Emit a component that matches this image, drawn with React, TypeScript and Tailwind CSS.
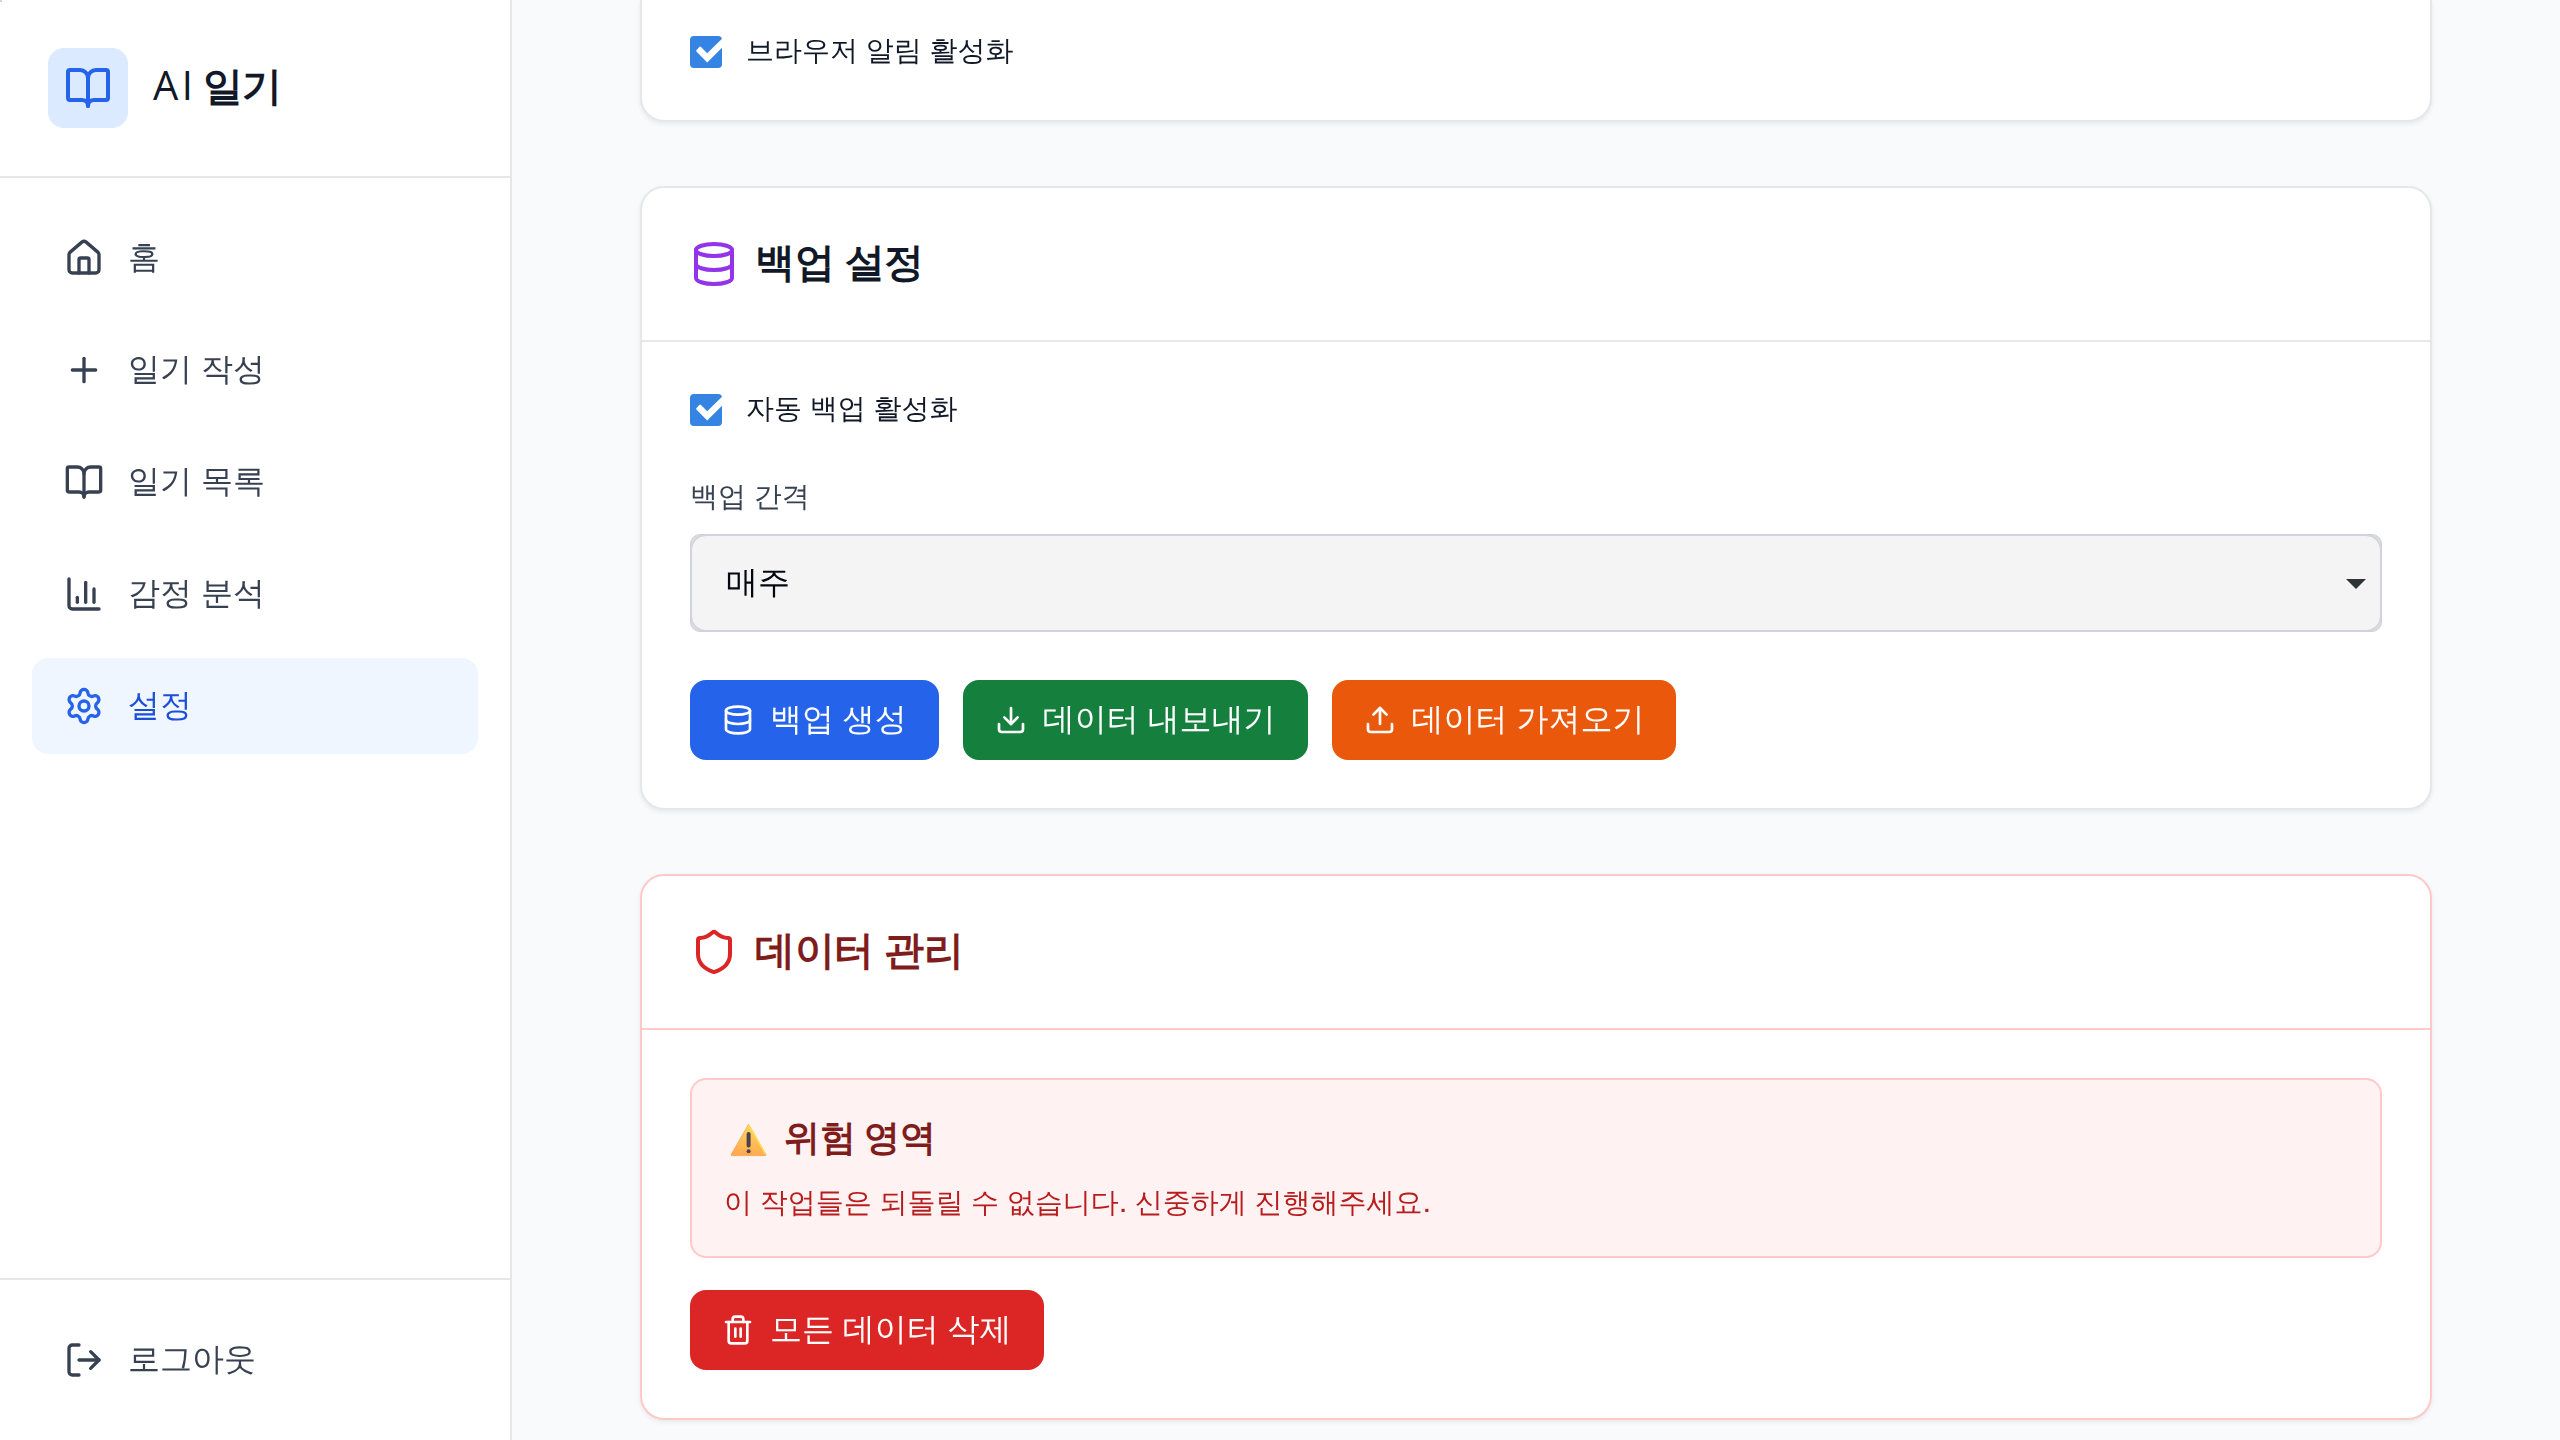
import type { ReactNode } from "react";
import {
  BookOpen,
  ChartColumn,
  Database,
  Download,
  House,
  LogOut,
  Plus,
  Settings,
  Shield,
  Trash2,
  Upload,
  type LucideIcon,
} from "lucide-react";

const navItems: { label: string; icon: LucideIcon; active?: boolean }[] = [
  { label: "홈", icon: House },
  { label: "일기 작성", icon: Plus },
  { label: "일기 목록", icon: BookOpen },
  { label: "감정 분석", icon: ChartColumn },
  { label: "설정", icon: Settings, active: true },
];

function NavItem({ label, icon: Icon, active }: { label: string; icon: LucideIcon; active?: boolean }) {
  return (
    <a
      className={
        active
          ? "flex h-24 items-center gap-6 rounded-2xl bg-[#eff6ff] px-8 text-[#1d4ed8]"
          : "flex h-24 items-center gap-6 rounded-2xl px-8 text-[#374151]"
      }
    >
      <Icon className={active ? "size-10 text-[#2563eb]" : "size-10"} />
      <span className="text-[32px] leading-[48px]">{label}</span>
    </a>
  );
}

function Sidebar() {
  return (
    <aside className="flex w-[512px] shrink-0 flex-col border-r-2 border-[#e5e7eb] bg-white">
      <div className="flex items-center gap-6 border-b-2 border-[#e5e7eb] p-12">
        <div className="rounded-2xl bg-[#dbeafe] p-4">
          <BookOpen className="size-12 text-[#2563eb]" />
        </div>
        <h1 className="mb-1.5 whitespace-nowrap pl-px font-['Liberation_Sans',sans-serif] text-[40px] leading-[56px] font-bold tracking-[-0.4px] text-[#111827]">
          <span className="font-['Open_Sans',sans-serif] font-normal">
            <span className="tracking-[3.4px]">A</span>I
          </span>{" "}
          일기
        </h1>
      </div>
      <nav className="flex flex-1 flex-col gap-4 p-8">
        {navItems.map((item) => (
          <NavItem key={item.label} {...item} />
        ))}
      </nav>
      <div className="border-t-2 border-[#e5e7eb] p-8">
        <NavItem label="로그아웃" icon={LogOut} />
      </div>
    </aside>
  );
}

function Checkbox({ label }: { label: string }) {
  return (
    <label className="flex h-10 items-center gap-6">
      <svg viewBox="0 0 32 32" className="size-8 rounded-[4px] bg-[#3584e4]">
        <path
          d="M6.4 14.2 9.3 11q.8-.9 1.7 0l6.2 6.3L32 2.8v9L17.2 26.4 6.4 15.6q-.7-.7 0-1.4Z"
          fill="#fff"
        />
      </svg>
      <span className="mb-0.5 text-[28px] leading-10 text-[#111827]">{label}</span>
    </label>
  );
}

function Card({
  title,
  icon,
  danger,
  children,
}: {
  title: string;
  icon: ReactNode;
  danger?: boolean;
  children: ReactNode;
}) {
  return (
    <section
      className={
        danger
          ? "rounded-3xl border-2 border-[#ffc9c9] bg-white shadow-[0_2px_5px_0_rgba(0,0,0,0.07)]"
          : "rounded-3xl border-2 border-[#e5e7eb] bg-white shadow-[0_2px_5px_0_rgba(0,0,0,0.07)]"
      }
    >
      <div
        className={
          danger
            ? "flex h-[154px] items-center gap-4 border-b-2 border-[#ffc9c9] px-12 text-[#7f1d1d]"
            : "flex h-[154px] items-center gap-4 border-b-2 border-[#e5e7eb] px-12 text-[#111827]"
        }
      >
        {icon}
        <h2 className="mb-[5px] pl-px font-['Liberation_Sans',sans-serif] text-[40px] leading-[56px] font-semibold tracking-[-0.3px]">
          {title}
        </h2>
      </div>
      <div className="p-12">{children}</div>
    </section>
  );
}

function ActionButton({ label, icon: Icon, color }: { label: string; icon: LucideIcon; color: string }) {
  return (
    <button
      className={
        "flex h-20 items-center gap-4 rounded-2xl px-8 text-[32px] leading-[48px] text-white [word-spacing:-0.8px] " + color
      }
    >
      <Icon className="size-8" />
      <span className="whitespace-nowrap">{label}</span>
    </button>
  );
}

function WarningSign() {
  return (
    <svg viewBox="0 0 50 36" className="h-9 w-[50px]" role="img" aria-label="경고">
      <defs>
        <linearGradient id="sign" x1="0.6" y1="0" x2="0.45" y2="1">
          <stop offset="0" stopColor="#ffd95e" />
          <stop offset="0.55" stopColor="#ffbe58" />
          <stop offset="1" stopColor="#ffa850" />
        </linearGradient>
      </defs>
      <path
        d="M24.5 2.4 41.8 32.6Q42 33.6 41 33.6H8Q7 33.6 7.2 32.6Z"
        fill="url(#sign)"
        stroke="#f0a24c"
        strokeWidth="0.8"
        strokeLinejoin="round"
      />
      <path d="m25 3.2 16.5 29" stroke="#ffe04a" strokeWidth="1.4" />
      <rect x="22.6" y="10" width="4" height="15.5" rx="2" fill="#4a434f" />
      <circle cx="24.6" cy="29.2" r="2" fill="#4a434f" />
    </svg>
  );
}

export default function App() {
  return (
    <div className="flex h-[1440px] w-[2560px] overflow-hidden bg-[#f9fafb] font-['WenQuanYi_Zen_Hei','Liberation_Sans',sans-serif] [word-spacing:-0.7px]">
      <span className="absolute top-0 left-0 size-0.5 bg-[#d4d4d4]" />
      <Sidebar />
      <main className="flex flex-1 flex-col gap-16 px-32">
        <section className="rounded-b-3xl border-2 border-t-0 border-[#e5e7eb] bg-white px-12 pt-8 pb-12 shadow-[0_2px_5px_0_rgba(0,0,0,0.07)]">
          <Checkbox label="브라우저 알림 활성화" />
        </section>

        <Card title="백업 설정" icon={<Database className="size-12 text-[#9333ea]" />}>
          <div className="flex flex-col gap-12">
            <Checkbox label="자동 백업 활성화" />
            <div className="flex flex-col gap-4">
              <div className="-mt-px mb-px text-[28px] leading-10 text-[#374151]">백업 간격</div>
              <div className="rounded-[10px] border border-[#d0d1d3] bg-[#dcdddf]">
                <div className="flex h-24 items-center justify-between rounded-[15px] border border-[#d1d5db] bg-[#f4f4f4] pr-[14px] pl-[34px] outline outline-[#d1d5db]">
                  <span className="text-[32px] leading-[48px] text-[#030712]">매주</span>
                  <svg viewBox="0 0 20 10" className="mt-0.5 h-2.5 w-5">
                    <path d="M0 0h20L10 10Z" fill="#2e3436" />
                  </svg>
                </div>
              </div>
            </div>
            <div className="flex gap-6">
              <ActionButton label="백업 생성" icon={Database} color="bg-[#2563eb]" />
              <ActionButton label="데이터 내보내기" icon={Download} color="bg-[#15803d]" />
              <ActionButton label="데이터 가져오기" icon={Upload} color="bg-[#ea580c]" />
            </div>
          </div>
        </Card>

        <Card title="데이터 관리" icon={<Shield className="size-12 text-[#dc2626]" />} danger>
          <div className="flex flex-col items-start gap-8">
            <div className="flex w-full flex-col gap-4 rounded-2xl border-2 border-[#ffc9c9] bg-[#fef2f2] p-8">
              <h3 className="flex h-14 items-center gap-2.5 font-['Liberation_Sans',sans-serif] text-[36px] leading-[56px] font-semibold tracking-[-0.3px] text-[#7f1d1d]">
                <WarningSign />
                <span className="mb-[5px]">위험 영역</span>
              </h3>
              <p className="-mt-px mb-px text-[28px] leading-10 text-[#b91c1c]">
                이 작업들은 되돌릴 수 없습니다. 신중하게 진행해주세요.
              </p>
            </div>
            <ActionButton label="모든 데이터 삭제" icon={Trash2} color="bg-[#dc2626]" />
          </div>
        </Card>
      </main>
    </div>
  );
}
